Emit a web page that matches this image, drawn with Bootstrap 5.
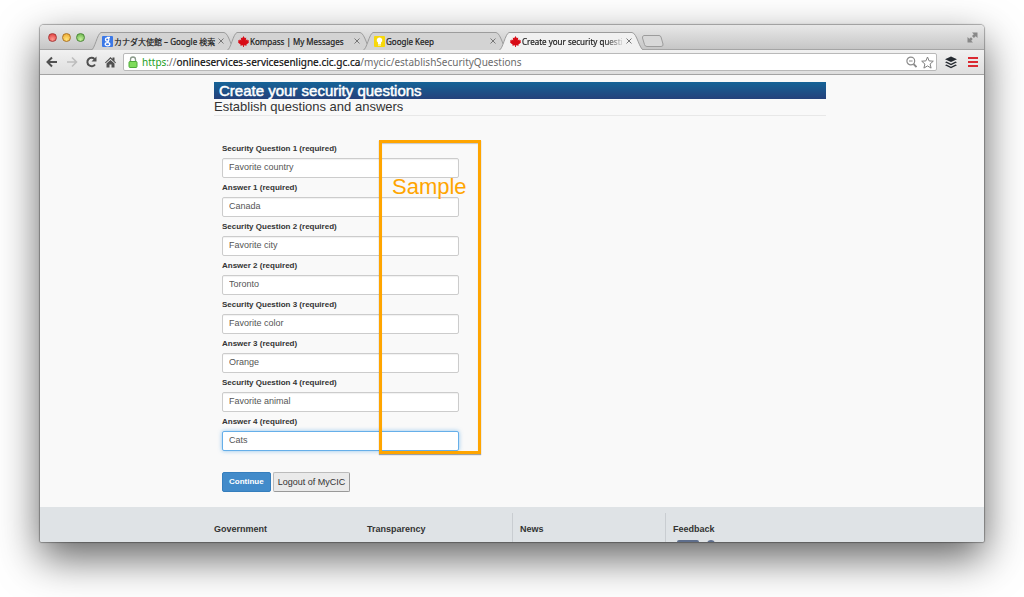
<!DOCTYPE html>
<html lang="en">
<head>
<meta charset="utf-8">
<meta name="viewport" content="width=device-width, initial-scale=1">
<title>Create your security questions</title>
<link href="https://cdn.jsdelivr.net/npm/bootstrap@5.3.0/dist/css/bootstrap.min.css" rel="stylesheet">
<style>
  body { background: #fff; font-family: "Liberation Sans", Arial, sans-serif; color: #333; }
  .desktop { height: 100vh; padding: 25px 40px 55px; overflow: hidden; }
  .browser { border-radius: 4px 4px 2px 2px; box-shadow: 0 0 1px 1px rgba(0,0,0,.3), 0 16px 42px rgba(0,0,0,.62); background: #f9f9f9; }
  .titlebar { height: 25px; padding: 7px 6px 0 8px; background: linear-gradient(#e8e8e8, #c6c6c6); border-bottom: 1px solid #a5a5a5; font-family: "Noto Sans", "Noto Sans CJK JP", sans-serif; }
  .lights { gap: 5px; padding-top: 1px; width: 49px; }
  .light { width: 9px; height: 9px; border: 1px solid; border-radius: 50%; }
  .light-close { background: radial-gradient(circle at 50% 75%, #ff9a90, #dc3535); border-color: #a83b3b; }
  .light-min { background: radial-gradient(circle at 50% 75%, #ffe37a, #eba32a); border-color: #ad7424; }
  .light-zoom { background: radial-gradient(circle at 50% 75%, #c8f29c, #60ae45); border-color: #4c8838; }
  .tabs { z-index: 0; }
  .tab { width: 136px; height: 18px; padding: 0 8px 0 5px; font-size: 8px; line-height: 17px; color: #1c1c1c; -webkit-text-stroke: .2px #1c1c1c; }
  .tab-shape { position: absolute; left: -6px; top: 0; z-index: -1; fill: #d3d3d3; stroke: #9c9c9c; }
  .tab-active { z-index: 2; }
  .tab-active .tab-shape { fill: #f1f1f1; }
  .tab-title { white-space: nowrap; overflow: hidden; margin-left: 1px; }
  .tab-active .tab-title { -webkit-mask-image: linear-gradient(90deg, #000 80%, transparent); mask-image: linear-gradient(90deg, #000 80%, transparent); }
  .icon-button { background: none; border: 0; padding: 0; display: flex; align-items: center; justify-content: center; }
  .toolbar { height: 25px; padding: 0 6px; background: linear-gradient(#f1f1f1, #dedede); border-bottom: 1px solid #a3a3a3; }
  .menu-button { margin-left: 11px; }
  .address { height: 18px; border: 1px solid #b9b9b9; border-radius: 2px; background: #fff; padding: 0 2px 0 4px; margin-left: -1px; font: 10px/16px "Noto Sans", sans-serif; color: #6b6b6b; white-space: nowrap; }
  .secure { color: #1ca01c; } .host { color: #111; -webkit-text-stroke: .2px #111; }
  .page { padding-top: 7px; }
  .sheet { width: 100%; max-width: 628px; padding-left: 16px; margin: 0 auto; }
  .page-title { margin: 0; padding-left: 5px; font-size: 15px; line-height: 17px; font-weight: 400; color: #fff; -webkit-text-stroke: .5px #fff; background: linear-gradient(#156397, #25417b); }
  .page-lead { margin: 0; font-size: 13px; line-height: 16px; font-weight: 400; border-bottom: 1px solid #e8e8e8; }
  .questions { margin-top: 24px; padding-left: 8px; }
  .questions label { display: block; font-size: 8px; line-height: 18px; font-weight: 700; }
  .answer { width: 237px; height: 20px; padding: 0 6px 2px; margin-bottom: 1px; font-size: 9px; line-height: 16px; color: #555; border: 1px solid #ccc; border-radius: 2px; box-shadow: inset 0 1px 1px rgba(0,0,0,.06); }
  .answer-current { border-color: #66afe9; box-shadow: 0 0 4px rgba(102,175,233,.7); }
  .actions { gap: 2px; padding-top: 20px; }
  .action { height: 20px; border-radius: 2px; line-height: 18px; }
  .action-main { padding: 0 6px; font-size: 8px; background: #428bca; border-color: #357ebd; color: #fff; font-weight: 700; }
  .action-plain { padding: 0 4px; font-size: 9px; background: #eaeaea; border-color: #bbb #999 #999 #bbb; color: #333; }
  .sample { position: absolute; left: 165px; top: 0; width: 102px; height: 314px; border: 3px solid orange; box-shadow: 0 1px 1px rgba(0,0,0,.35), inset 0 1px 1px rgba(0,0,0,.2); color: orange; font-size: 22px; line-height: 26px; padding: 31px 0 0 10px; pointer-events: none; }
  .site-footer { background: #dfe3e6; padding-top: 6px; margin-top: 15px; min-height: 36px; }
  .footer-col { width: 25%; height: 40px; }
  .footer-rule { border-left: 1px solid #c9cdd1; margin-left: -8px; padding-left: 7px; }
  .footer-col h2 { font-size: 9px; font-weight: 700; line-height: 12px; margin: 0; padding: 10px 0 5px; }
</style>
</head>
<body>
<svg class="d-none" aria-hidden="true">
  <symbol id="leaf" viewBox="0 0 24 24"><path fill="#d80b16" d="M12 0l3 5 3-2-1 7 3-3 1 3 3-1-1 4 1 1-6 5 1 2-6-1v4h-2v-4l-6 1 1-2-6-5 1-1-1-4 3 1 1-3 3 3-1-7 3 2z"/></symbol>
  <symbol id="tabshape" viewBox="0 0 147 18"><path d="M0 18.500C4 17 6 2 10 .5H133C138 1 140 17 145 18.500"/></symbol>
  <symbol id="cross" viewBox="0 0 8 8"><path d="M1.500 1.500l5 5m0-5l-5 5" stroke="#777" stroke-width="1"/></symbol>
</svg>
<div class="desktop">
<div class="browser d-flex flex-column h-100 overflow-hidden">
  <header>
    <div class="titlebar d-flex">
      <div class="lights d-flex"><span class="light light-close"></span><span class="light light-min"></span><span class="light light-zoom"></span></div>
      <nav class="tabs d-flex position-relative" aria-label="Tabs">
        <div class="tab d-flex align-items-center position-relative"><svg class="tab-shape" width="147" height="18"><use href="#tabshape"/></svg>
          <svg class="flex-shrink-0" width="11" height="11"><rect width="11" height="11" rx="1" fill="#3b78e7"/><g fill="none" stroke="#fff" stroke-width="1.300"><circle cx="5.200" cy="3.500" r="1.700"/><ellipse cx="5.500" cy="8.200" rx="2.300" ry="1.600"/><path d="M5 1.500h3M6.500 5l-1 1.500"/></g></svg>
          <span class="tab-title flex-grow-1">カナダ大使館 – Google 検索</span><button class="icon-button" aria-label="Close tab"><svg width="8" height="8"><use href="#cross"/></svg></button></div>
        <div class="tab d-flex align-items-center position-relative"><svg class="tab-shape" width="147" height="18"><use href="#tabshape"/></svg>
          <svg class="flex-shrink-0" width="11" height="11"><use href="#leaf"/></svg>
          <span class="tab-title flex-grow-1">Kompass | My Messages</span><button class="icon-button" aria-label="Close tab"><svg width="8" height="8"><use href="#cross"/></svg></button></div>
        <div class="tab d-flex align-items-center position-relative"><svg class="tab-shape" width="147" height="18"><use href="#tabshape"/></svg>
          <svg class="flex-shrink-0" width="11" height="11"><rect width="11" height="11" rx="1" fill="#f7d80c"/><path fill="#fff" d="M5.500 1.500a2.700 2.700 0 0 1 1.500 5V8H4V6.500a2.700 2.700 0 0 1 1.500-5zM4 8.500h3v1H4z"/></svg>
          <span class="tab-title flex-grow-1">Google Keep</span><button class="icon-button" aria-label="Close tab"><svg width="8" height="8"><use href="#cross"/></svg></button></div>
        <div class="tab tab-active d-flex align-items-center position-relative"><svg class="tab-shape" width="147" height="18"><use href="#tabshape"/></svg>
          <svg class="flex-shrink-0" width="11" height="11"><use href="#leaf"/></svg>
          <span class="tab-title flex-grow-1">Create your security questi</span><button class="icon-button" aria-label="Close tab"><svg width="8" height="8"><use href="#cross"/></svg></button></div>
        <button class="icon-button" aria-label="New tab"><svg width="24" height="14"><path d="M3 1.500h15q1.500 0 2 1.500l2 7q.5 2.500-2 2.500H6q-2 0-2.500-2L1.500 4Q1 2 3 1.500z" fill="#d8d8d8" stroke="#9c9c9c"/></svg></button>
      </nav>
      <button class="icon-button ms-auto align-self-start" aria-label="Full screen"><svg width="11" height="11" fill="#888"><path d="M5 .5h5.500V6L8.700 4.200 6.900 6 5 4.100l1.800-1.800zM.5 5v5.500H6L4.200 8.700 5.700 7 4 5.200 2.300 6.800z"/></svg></button>
    </div>
    <div class="toolbar d-flex align-items-center">
      <button class="icon-button me-2" aria-label="Back"><svg width="12" height="12" fill="none" stroke="#505050" stroke-width="2"><path d="M11 6H2M6 1.500L1.500 6 6 10.500"/></svg></button>
      <button class="icon-button me-2" aria-label="Forward"><svg width="12" height="12" fill="none" stroke="#bdbdbd" stroke-width="1.600"><path d="M1 6h9M6 1.500L10.500 6 6 10.500"/></svg></button>
      <button class="icon-button me-2" aria-label="Reload"><svg width="11" height="12"><path d="M9 8.500A4.200 4.200 0 1 1 8.500 3" fill="none" stroke="#505050" stroke-width="2"/><path d="M10.500.5v5h-5z" fill="#505050"/></svg></button>
      <button class="icon-button me-2" aria-label="Home"><svg width="11" height="12" fill="#505050"><path d="M0 6.500L5.500 1 7.500 3V1.500h2V5L11 6.500l-.7.800L5.500 2.800.7 7.300zM1.500 7.500l4-3.600 4 3.600v4h-3v-3h-2v3h-3z"/></svg></button>
      <div class="address flex-grow-1 d-flex align-items-center">
        <svg class="flex-shrink-0" width="10" height="12"><path d="M2.500 6V3.500a2.500 2.500 0 0 1 5 0V6" fill="none" stroke="#8a9a8a" stroke-width="1.300"/><rect x="1" y="5.500" width="8" height="6" rx="1" fill="#7fdb5b" stroke="#4eaa38"/></svg>
        <span class="flex-grow-1 ms-1"><span class="secure">https</span>://<span class="host">onlineservices-servicesenligne.cic.gc.ca</span>/mycic/establishSecurityQuestions</span>
        <button class="icon-button me-1" aria-label="Zoom"><svg width="11" height="12" fill="none" stroke="#8c8c8c" stroke-width="1.200"><circle cx="4.800" cy="5" r="3.900"/><path d="M7.500 8l3 3" stroke-width="1.800"/><path d="M3 5h3.600"/></svg></button>
        <button class="icon-button" aria-label="Bookmark"><svg width="13" height="13"><path d="M6.500 1l1.600 3.900 4.200.3L9.100 8l1 4.100-3.600-2.200L2.900 12.100l1-4.100L.7 5.200l4.200-.3z" fill="#fff" stroke="#808080"/></svg></button>
      </div>
      <button class="icon-button ms-2" aria-label="Buffer"><svg width="12" height="13" fill="#252a30"><path d="M6 .5l6 2.700-6 2.700L0 3.200zM0 6.300l1.500-.7L6 7.700l4.500-2.100 1.500.7L6 9.200zM0 9.300l1.500-.7L6 10.700l4.500-2.100 1.500.7-6 2.900z"/></svg></button>
      <button class="icon-button menu-button" aria-label="Menu"><svg width="10" height="10" fill="#da2931"><path d="M0 0h10v2H0zM0 4h10v2H0zM0 8h10v2H0z"/></svg></button>
    </div>
  </header>
  <div class="page flex-grow-1 overflow-hidden">
    <main class="sheet">
      <h1 class="page-title">Create your security questions</h1>
      <h2 class="page-lead">Establish questions and answers</h2>
      <form class="questions position-relative">
        <label for="q1">Security Question 1 (required)</label><input class="answer d-block" id="q1" value="Favorite country">
        <label for="a1">Answer 1 (required)</label><input class="answer d-block" id="a1" value="Canada">
        <label for="q2">Security Question 2 (required)</label><input class="answer d-block" id="q2" value="Favorite city">
        <label for="a2">Answer 2 (required)</label><input class="answer d-block" id="a2" value="Toronto">
        <label for="q3">Security Question 3 (required)</label><input class="answer d-block" id="q3" value="Favorite color">
        <label for="a3">Answer 3 (required)</label><input class="answer d-block" id="a3" value="Orange">
        <label for="q4">Security Question 4 (required)</label><input class="answer d-block" id="q4" value="Favorite animal">
        <label for="a4">Answer 4 (required)</label><input class="answer answer-current d-block" id="a4" value="Cats">
        <div class="sample">Sample</div>
        <div class="actions d-flex"><button type="submit" class="btn action action-main">Continue</button><button type="button" class="btn action action-plain">Logout of MyCIC</button></div>
      </form>
    </main>
    <footer class="site-footer">
      <div class="sheet d-flex">
        <div class="footer-col"><h2>Government</h2></div>
        <div class="footer-col"><h2>Transparency</h2></div>
        <div class="footer-col"><div class="footer-rule h-100"><h2>News</h2></div></div>
        <div class="footer-col"><div class="footer-rule h-100"><h2>Feedback</h2>
          <svg class="d-block" width="42" height="16" fill="#5e6e8c"><rect x="4" width="22" height="14" rx="2"/><circle cx="38" cy="4" r="4"/></svg></div></div>
      </div>
    </footer>
  </div>
</div>
</div>
<script src="https://cdn.jsdelivr.net/npm/bootstrap@5.3.0/dist/js/bootstrap.bundle.min.js"></script>
</body>
</html>
